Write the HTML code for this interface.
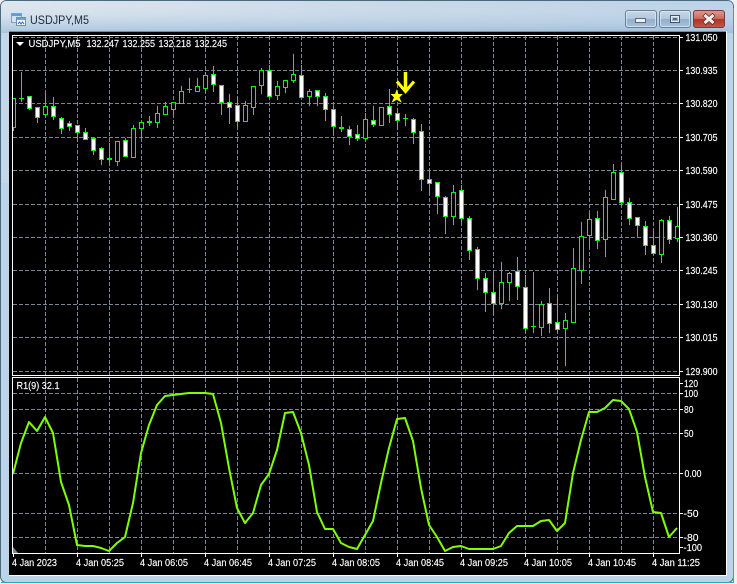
<!DOCTYPE html>
<html><head><meta charset="utf-8"><title>USDJPY,M5</title>
<style>
html,body{margin:0;padding:0;background:#f0f0f0;width:737px;height:584px;overflow:hidden}
svg{display:block}
text{font-family:"Liberation Sans",sans-serif;font-size:10.5px;fill:#fff;stroke:#fff;stroke-width:.15px}
.c{shape-rendering:crispEdges}
</style></head><body>
<svg width="737" height="584" viewBox="0 0 737 584" xmlns="http://www.w3.org/2000/svg">
<defs>
<linearGradient id="top" x1="0" y1="0" x2="1" y2="0"><stop offset="0" stop-color="#d6e0ea"/><stop offset=".5" stop-color="#bccfe2"/><stop offset="1" stop-color="#a9c5e0"/></linearGradient>
<linearGradient id="top2" x1="0" y1="0" x2="0" y2="1"><stop offset="0" stop-color="#fff" stop-opacity=".2"/><stop offset="1" stop-color="#9dbcdb" stop-opacity=".8"/></linearGradient>
<linearGradient id="btn" x1="0" y1="0" x2="0" y2="1"><stop offset="0" stop-color="#c8d8e8"/><stop offset=".48" stop-color="#b2c8dd"/><stop offset=".52" stop-color="#93aecb"/><stop offset="1" stop-color="#a9c3dc"/></linearGradient>
<linearGradient id="cls" x1="0" y1="0" x2="0" y2="1"><stop offset="0" stop-color="#dd9c90"/><stop offset=".48" stop-color="#ca6a5c"/><stop offset=".52" stop-color="#b23226"/><stop offset="1" stop-color="#c4584a"/></linearGradient>
<clipPath id="m"><rect x="13" y="36" width="666" height="339"/></clipPath>
<clipPath id="r"><rect x="13" y="378" width="666" height="175"/></clipPath>
</defs>
<rect x="0.5" y="0.5" width="733" height="582" rx="6" fill="#bcd4ea" stroke="#4a6a80"/>
<path d="M1 582.5H733.5V8" fill="none" stroke="#33a3b5" stroke-width="1" class="c"/>
<path d="M1 7Q1 1 7 1H727Q733 1 733 7V33H1Z" fill="url(#top)"/>
<path d="M1 7Q1 1 7 1H727Q733 1 733 7V33H1Z" fill="url(#top2)"/>
<rect x="2" y="33" width="7" height="150" fill="#c4d6e8"/>
<rect x="9" y="31" width="718" height="545" fill="#fff" class="c"/>
<rect x="9" y="31" width="717" height="1" fill="#7c8da0" class="c"/>
<rect x="9" y="32" width="717" height="543" fill="#000" class="c"/>

<!-- title icon -->
<g class="c">
<rect x="11.5" y="13.5" width="10" height="9" fill="#cfe3f5" stroke="#6fa2d6"/>
<rect x="12" y="14" width="9" height="2" fill="#5f9bd8"/>
<rect x="16.5" y="17.5" width="9" height="8" fill="#f3f8fd" stroke="#5b93cc"/>
<rect x="17" y="18" width="8" height="2" fill="#6aa4dc"/>
</g>
<path d="M18 24l1.500-2 1.500 2 1.500-2 1.500 2" fill="none" stroke="#3a6ea8" stroke-width="1"/>
<text x="30" y="24" textLength="59" lengthAdjust="spacingAndGlyphs" style="font-size:12px;fill:#1d2b3c;stroke:none">USDJPY,M5</text>

<!-- window buttons -->
<rect x="625.500" y="10.500" width="31" height="17" rx="2.500" fill="url(#btn)" stroke="#6a7f98"/>
<rect x="626.500" y="11.500" width="29" height="15" rx="2" fill="none" stroke="#dfe9f3" stroke-opacity=".7"/>
<rect x="635.500" y="18.500" width="10" height="4" fill="#eef2f6" stroke="#5a6a7c" class="c"/>
<rect x="659.500" y="10.500" width="31" height="17" rx="2.500" fill="url(#btn)" stroke="#6a7f98"/>
<rect x="660.500" y="11.500" width="29" height="15" rx="2" fill="none" stroke="#dfe9f3" stroke-opacity=".7"/>
<rect x="670.500" y="15.500" width="9" height="7" fill="none" stroke="#46566a" class="c"/>
<rect x="671.500" y="16.500" width="7" height="5" fill="none" stroke="#e8eef4" class="c"/>
<rect x="673" y="18" width="4" height="2" fill="#5a6a7c" class="c"/>
<rect x="693.500" y="10.500" width="31" height="17" rx="2.500" fill="url(#cls)" stroke="#7a3a3a"/>
<path d="M704 14.500l10 9M714 14.500l-10 9" stroke="#5a2a2a" stroke-width="4.500"/>
<path d="M704.500 15l9 8M713.500 15l-9 8" stroke="#f4f0ee" stroke-width="3"/>

<!-- header -->
<path d="M16 42h8l-4 4z" fill="#fff"/>

<!-- grid -->
<g clip-path="url(#m)" class="c">
<path stroke="#778899" fill="none" stroke-dasharray="4 2" d="M13 37.500H679M13 70.500H679M13 103.500H679M13 137.500H679M13 170.500H679M13 204.500H679M13 237.500H679M13 270.500H679M13 304.500H679M13 337.500H679M13 371.500H679
M45.500 36V375M77.500 36V375M109.500 36V375M141.500 36V375M173.500 36V375M205.500 36V375M237.500 36V375M269.500 36V375M301.500 36V375M333.500 36V375M365.500 36V375M397.500 36V375M429.500 36V375M461.500 36V375M493.500 36V375M525.500 36V375M557.500 36V375M589.500 36V375M621.500 36V375M653.500 36V375"/>
<!-- wicks -->
<path stroke="#00ff00" fill="none" d="M13.500 98V131M21.500 72V102M29.500 96V110M37.500 107V123M45.500 93V118M53.500 97V120M61.500 117V134M69.500 121V131M77.500 125V140M85.500 128V139M93.500 138V155M101.500 147V165M109.500 143V164M117.500 141V166M125.500 138V157M133.500 125V158M141.500 122V138M149.500 116V126M157.500 106V128M165.500 102V114M173.500 102V115M181.500 86V103M189.500 78V93M197.500 78V91M205.500 72V93M213.500 66V92M221.500 85V115M229.500 94V124M237.500 97V127M245.500 101V121M253.500 86V115M261.500 68V94M269.500 65V96M277.500 81V100M285.500 80V93M293.500 54V83M301.500 65V98M309.500 89V106M317.500 90V106M325.500 93V121M333.500 106V134M341.500 116V132M349.500 126V145M357.500 125V141M365.500 113V142M373.500 106V127M381.500 107V125M389.500 89V123M397.500 108V130M405.500 114V126M413.500 118V144M421.500 124V191M429.500 170V194M437.500 182V214M445.500 196V234M453.500 185V225M461.500 185V223M469.500 216V260M477.500 247V290M485.500 273V312M493.500 273V314M501.500 262V309M509.500 272V301M517.500 257V300M525.500 275V333M533.500 272V333M541.500 301V336M549.500 288V333M557.500 297V332M565.500 313V366M573.500 248V323M581.500 222V284M589.500 213V248M597.500 211V249M605.500 190V257M613.500 164V199M621.500 165V206M629.500 198V225M637.500 217V237M645.500 221V255M653.500 231V255M661.500 219V263M669.500 216V244M677.500 207V242"/>
<!-- dojis -->
<path stroke="#00ff00" fill="none" d="M19 98.500h5"/>
<path stroke="#00ff00" stroke-width="2" fill="none" d="M107 159h5M147 122h5M339 128h5"/>
<path stroke="#00ff00" fill="none" d="M187 89.500h5M403 118.500h5M531 326.500h5"/>
<!-- hollow bodies -->
<path fill="#000" stroke="#00ff00" d="M11.500 98.500h4v29h-4zM43.500 106.500h4v8h-4zM115.500 141.500h4v20h-4zM131.500 128.500h4v29h-4zM139.500 122.500h4v6h-4zM155.500 113.500h4v9h-4zM163.500 106.500h4v8h-4zM171.500 102.500h4v7h-4zM179.500 91.500h4v12h-4zM195.500 86.500h4v5h-4zM203.500 75.500h4v13h-4zM243.500 105.500h4v16h-4zM251.500 86.500h4v21h-4zM259.500 70.500h4v15h-4zM275.500 86.500h4v9h-4zM283.500 80.500h4v7h-4zM291.500 74.500h4v6h-4zM307.500 91.500h4v5h-4zM363.500 119.500h4v19h-4zM379.500 107.500h4v18h-4zM451.500 192.500h4v24h-4zM499.500 282.500h4v21h-4zM507.500 273.500h4v9h-4zM539.500 304.500h4v23h-4zM563.500 320.500h4v8h-4zM571.500 268.500h4v54h-4zM579.500 236.500h4v34h-4zM587.500 219.500h4v16h-4zM603.500 197.500h4v42h-4zM611.500 172.500h4v27h-4zM659.500 220.500h4v34h-4zM675.500 226.500h4v12h-4z"/>
<!-- filled bodies -->
<path fill="#fff" stroke="#00ff00" d="M27.500 96.500h4v12h-4zM35.500 107.500h4v10h-4zM51.500 106.500h4v10h-4zM59.500 118.500h4v10h-4zM67.500 123.500h4v3h-4zM75.500 125.500h4v7h-4zM83.500 132.500h4v7h-4zM91.500 138.500h4v12h-4zM99.500 148.500h4v11h-4zM123.500 140.500h4v16h-4zM211.500 74.500h4v10h-4zM219.500 85.500h4v17h-4zM227.500 102.500h4v5h-4zM235.500 105.500h4v16h-4zM267.500 70.500h4v26h-4zM299.500 75.500h4v22h-4zM315.500 90.500h4v6h-4zM323.500 96.500h4v13h-4zM331.500 109.500h4v17h-4zM347.500 129.500h4v7h-4zM355.500 134.500h4v4h-4zM371.500 120.500h4v4h-4zM387.500 106.500h4v8h-4zM395.500 113.500h4v7h-4zM411.500 119.500h4v13h-4zM419.500 131.500h4v48h-4zM427.500 179.500h4v4h-4zM435.500 182.500h4v14h-4zM443.500 197.500h4v19h-4zM459.500 190.500h4v28h-4zM467.500 218.500h4v32h-4zM475.500 249.500h4v29h-4zM483.500 278.500h4v14h-4zM491.500 292.500h4v11h-4zM515.500 271.500h4v15h-4zM523.500 287.500h4v41h-4zM547.500 303.500h4v20h-4zM555.500 322.500h4v7h-4zM595.500 218.500h4v22h-4zM619.500 172.500h4v30h-4zM627.500 202.500h4v16h-4zM635.500 217.500h4v8h-4zM643.500 226.500h4v19h-4zM651.500 245.500h4v8h-4zM667.500 220.500h4v19h-4z"/>
</g>

<!-- arrow and star -->
<path d="M405.500 72V91" stroke="#ffff00" stroke-width="3.500" fill="none"/>
<path d="M397 81.500L405.500 91.500L414 81.500" stroke="#ffff00" stroke-width="3" fill="none"/>
<path d="M396.700 89.300L398.400 94L402.900 94L399.400 97.500L401.900 102.700L396.700 99.700L391.500 102.700L394 97.500L390.500 94L395 94Z" fill="#ffff00"/>

<!-- indicator grid -->
<g clip-path="url(#r)" class="c">
<path stroke="#778899" fill="none" stroke-dasharray="4 2" d="M13 393.500H679M13 409.500H679M13 433.500H679M13 473.500H679M13 513.500H679M13 537.500H679
M45.500 378V553M77.500 378V553M109.500 378V553M141.500 378V553M173.500 378V553M205.500 378V553M237.500 378V553M269.500 378V553M301.500 378V553M333.500 378V553M365.500 378V553M397.500 378V553M429.500 378V553M461.500 378V553M493.500 378V553M525.500 378V553M557.500 378V553M589.500 378V553M621.500 378V553M653.500 378V553"/>
</g>
<path d="M13 547L18 553H13Z" fill="#778899"/>
<polyline clip-path="url(#r)" fill="none" stroke="#7fff00" stroke-width="2" stroke-linejoin="round" points="13,474 21,443 29,422 37,431 45,417 53,433 61,482 69,505 77,545 85,546 93,546 101,548 109,551 117,543 125,537 133,503 141,453 149,425 157,405 165,396 173,395 181,394 189,393 197,393 205,393 213,394 221,423 229,468 237,508 245,523 253,513 261,485 269,474 277,450 285,413 293,412 301,433 309,465 317,512 325,529 333,529 341,543 349,547 357,549 365,535 373,521 381,483 389,448 397,419 405,418 413,441 421,488 429,525 437,537 445,551 453,547 461,546 469,549 477,549 485,549 493,549 501,546 509,533 517,526 525,526 533,526 541,521 549,520 557,531 565,523 573,473 581,440 589,412 597,412 605,408 613,400 621,401 629,409 637,432 645,477 653,512 661,513 669,537 677,528"/>

<!-- frames and ticks -->
<g class="c" fill="none" stroke="#fff">
<path d="M12.500 35.500H679.500V375.500H12.500Z"/>
<path d="M12.500 377.500H679.500V553.500H12.500Z"/>
<path d="M680 37.500h3M680 70.500h3M680 103.500h3M680 137.500h3M680 170.500h3M680 204.500h3M680 237.500h3M680 270.500h3M680 304.500h3M680 337.500h3M680 371.500h3"/>
<path d="M680 383.500h3M680 393.500h3M680 409.500h3M680 433.500h3M680 473.500h3M680 513.500h3M680 537.500h3M680 547.500h3"/>
<path d="M13.500 554v3M77.500 554v3M141.500 554v3M205.500 554v3M269.500 554v3M333.500 554v3M397.500 554v3M461.500 554v3M525.500 554v3M589.500 554v3M653.500 554v3"/>
</g>

<!-- header text -->
<text x="28.500" y="47" textLength="52" lengthAdjust="spacingAndGlyphs">USDJPY,M5</text>
<text x="86.500" y="47" textLength="32.500" lengthAdjust="spacingAndGlyphs">132.247</text>
<text x="122.500" y="47" textLength="32.500" lengthAdjust="spacingAndGlyphs">132.255</text>
<text x="158.500" y="47" textLength="32.500" lengthAdjust="spacingAndGlyphs">132.218</text>
<text x="194.500" y="47" textLength="32.500" lengthAdjust="spacingAndGlyphs">132.245</text>
<text x="16.500" y="389" textLength="43" lengthAdjust="spacingAndGlyphs">R1(9) 32.1</text>

<!-- price axis -->
<text x="685.500" y="41" textLength="32" lengthAdjust="spacingAndGlyphs">131.050</text>
<text x="685.500" y="74" textLength="32" lengthAdjust="spacingAndGlyphs">130.935</text>
<text x="685.500" y="107" textLength="32" lengthAdjust="spacingAndGlyphs">130.820</text>
<text x="685.500" y="141" textLength="32" lengthAdjust="spacingAndGlyphs">130.705</text>
<text x="685.500" y="174" textLength="32" lengthAdjust="spacingAndGlyphs">130.590</text>
<text x="685.500" y="208" textLength="32" lengthAdjust="spacingAndGlyphs">130.475</text>
<text x="685.500" y="241" textLength="32" lengthAdjust="spacingAndGlyphs">130.360</text>
<text x="685.500" y="274" textLength="32" lengthAdjust="spacingAndGlyphs">130.245</text>
<text x="685.500" y="308" textLength="32" lengthAdjust="spacingAndGlyphs">130.130</text>
<text x="685.500" y="341" textLength="32" lengthAdjust="spacingAndGlyphs">130.015</text>
<text x="685.500" y="375" textLength="32" lengthAdjust="spacingAndGlyphs">129.900</text>

<!-- indicator axis -->
<text x="684" y="387" textLength="14" lengthAdjust="spacingAndGlyphs">120</text>
<text x="684" y="397" textLength="14" lengthAdjust="spacingAndGlyphs">100</text>
<text x="684" y="413" textLength="9.500" lengthAdjust="spacingAndGlyphs">80</text>
<text x="684" y="437" textLength="9.500" lengthAdjust="spacingAndGlyphs">50</text>
<text x="684.500" y="477" textLength="17" lengthAdjust="spacingAndGlyphs">0.00</text>
<text x="683.500" y="517" textLength="15" lengthAdjust="spacingAndGlyphs">-50</text>
<text x="683.500" y="541" textLength="15" lengthAdjust="spacingAndGlyphs">-80</text>
<text x="683.500" y="551" textLength="18.500" lengthAdjust="spacingAndGlyphs">-100</text>

<!-- time axis -->
<text x="12" y="566" textLength="45" lengthAdjust="spacingAndGlyphs">4 Jan 2023</text>
<text x="76" y="566" textLength="48" lengthAdjust="spacingAndGlyphs">4 Jan 05:25</text>
<text x="140" y="566" textLength="48" lengthAdjust="spacingAndGlyphs">4 Jan 06:05</text>
<text x="204" y="566" textLength="48" lengthAdjust="spacingAndGlyphs">4 Jan 06:45</text>
<text x="268" y="566" textLength="48" lengthAdjust="spacingAndGlyphs">4 Jan 07:25</text>
<text x="332" y="566" textLength="48" lengthAdjust="spacingAndGlyphs">4 Jan 08:05</text>
<text x="396" y="566" textLength="48" lengthAdjust="spacingAndGlyphs">4 Jan 08:45</text>
<text x="460" y="566" textLength="48" lengthAdjust="spacingAndGlyphs">4 Jan 09:25</text>
<text x="524" y="566" textLength="48" lengthAdjust="spacingAndGlyphs">4 Jan 10:05</text>
<text x="588" y="566" textLength="48" lengthAdjust="spacingAndGlyphs">4 Jan 10:45</text>
<text x="652" y="566" textLength="48" lengthAdjust="spacingAndGlyphs">4 Jan 11:25</text>
</svg>
</body></html>
